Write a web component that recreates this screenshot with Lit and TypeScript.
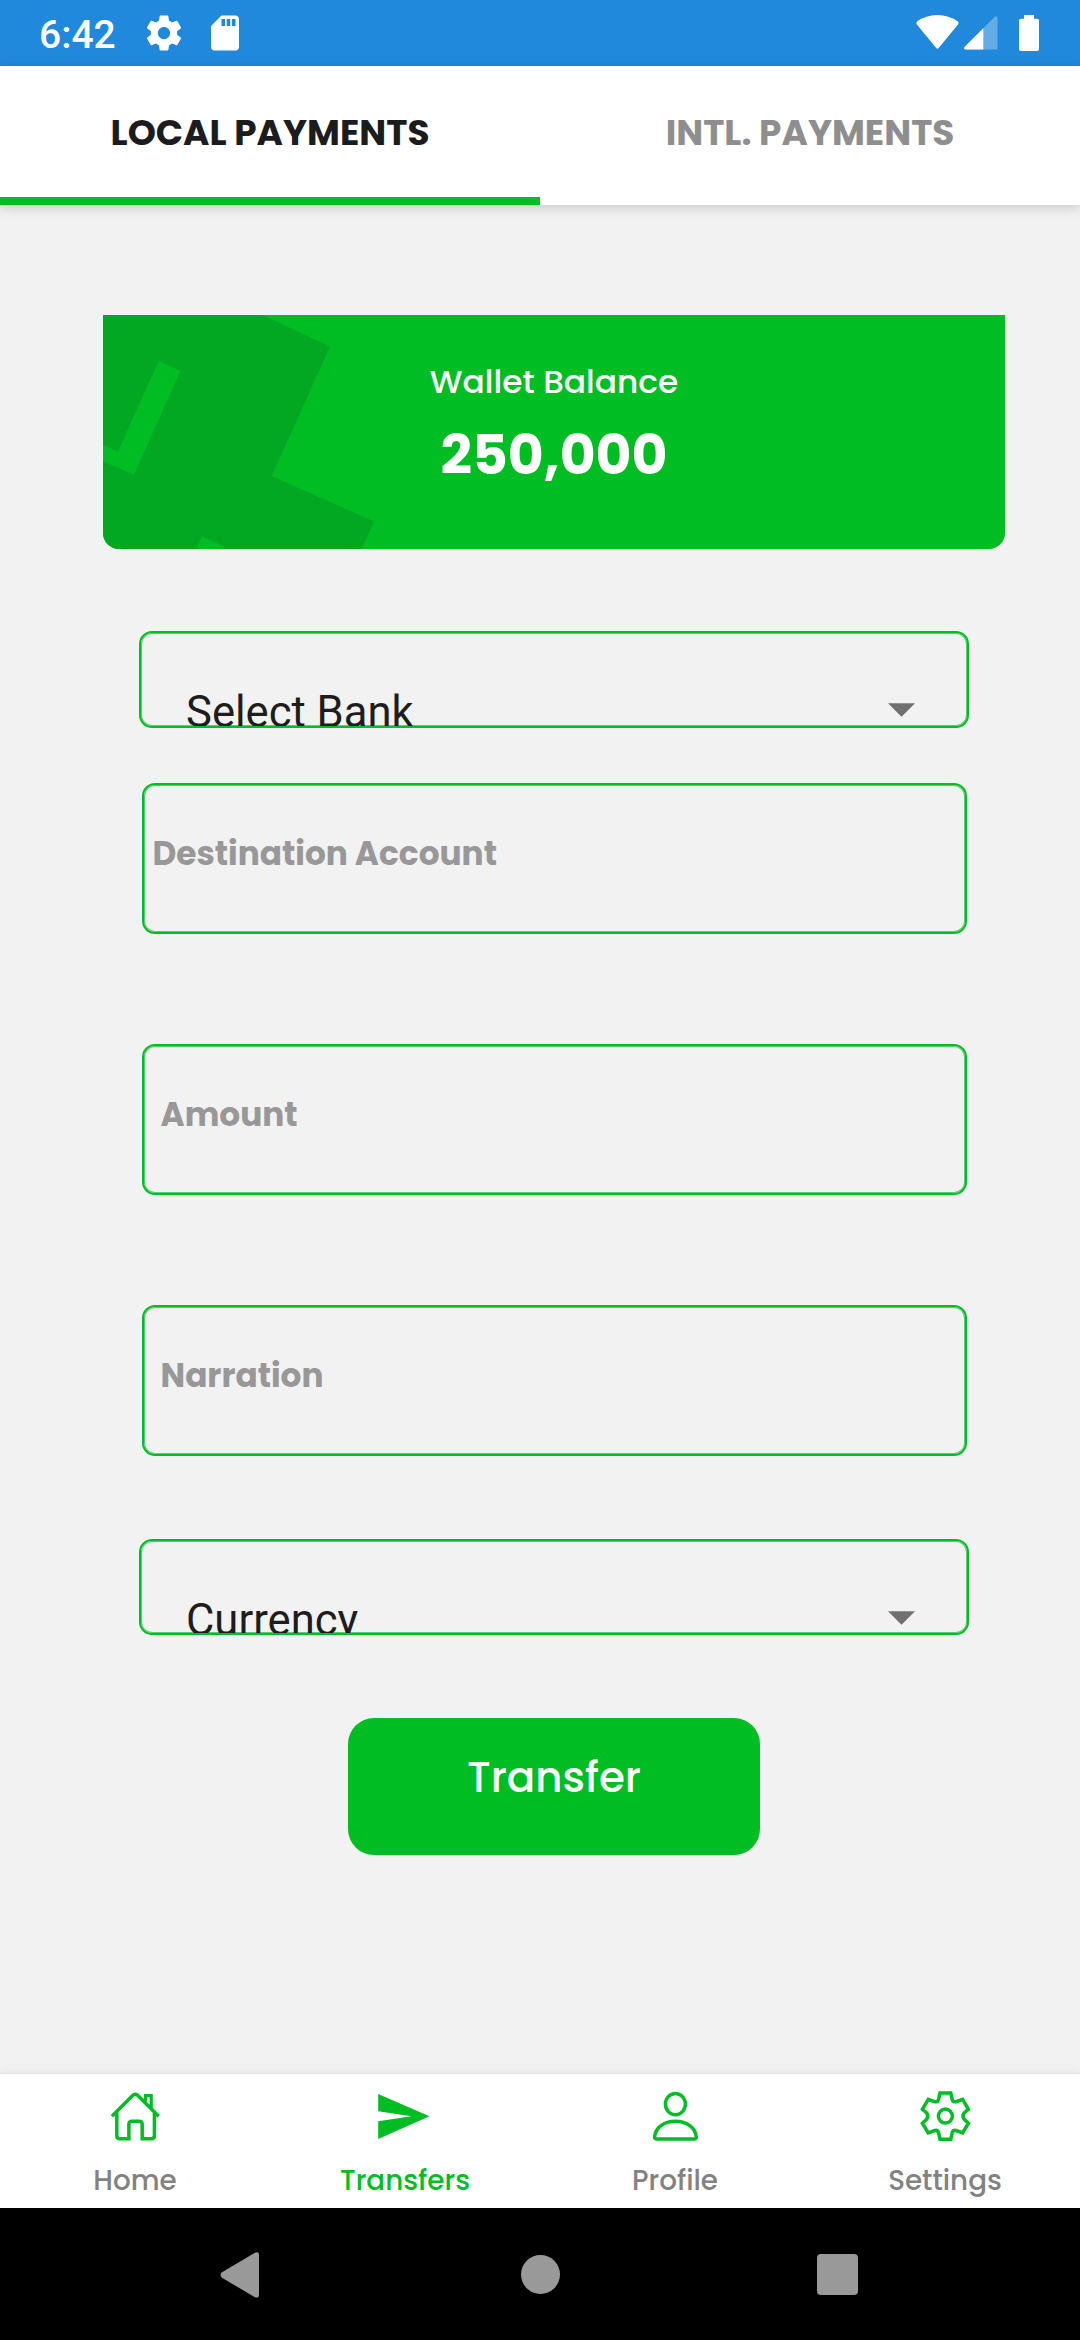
import { LitElement, html, css, svg } from "lit";

const caret = html`<svg class="caret" viewBox="0 0 27 14"><path d="M0 0.3H27L13.5 13.8Z" /></svg>`;

const icons: Record<string, unknown> = {
  home: svg`<path d="M3.9 26.2 24.4 5.8Q27.3 2.6 30.2 5.8L50.7 26.2M8.8 22.5V45.5Q8.8 48.7 12 48.7H20.9V34.5Q20.9 31.3 24 31.3H31Q34.2 31.3 34.2 34.5V48.7H43.4Q46.4 48.7 46.4 45.5V22.5"/><path stroke-width="3.2" d="M37.6 11.5V5.5H43.2V19"/>`,
  send: svg`<path class="solid" d="M0.2 4 51.5 26.3 0.2 48.9V31.2L33.5 26.3 0.2 21.2Z"/>`,
  profile: svg`<ellipse cx="27.4" cy="14.1" rx="10" ry="10.6"/><path d="M6.6 47C7.4 37.6 15.8 31.3 27.4 31.3S47.4 37.6 48.3 47Q48.4 48.9 46.6 48.9H8.3Q6.5 48.9 6.6 47Z"/>`,
  settings: svg`<circle cx="27.4" cy="26.1" r="7"/><path d="M22 2.9H32.8L34.2 9.6Q35 12.4 38 11.7L44.6 9.4 50.4 19.4 46.2 22.9Q43.7 26.1 46.2 29.3L50.4 33.2 44.6 42.8 38 40.5Q35 39.8 34.2 42.6L32.8 49.3H22L20.6 42.6Q19.8 39.8 16.8 40.5L10.2 42.8 4.4 33.2 8.6 29.3Q11.1 26.1 8.6 22.9L4.4 19.4 10.2 9.4 16.8 11.7Q19.8 12.4 20.6 9.6Z"/>`,
};

const tabs = [
  { label: "LOCAL PAYMENTS", active: true },
  { label: "INTL. PAYMENTS", active: false },
];

const navItems = [
  { icon: "home", label: "Home", active: false },
  { icon: "send", label: "Transfers", active: true },
  { icon: "profile", label: "Profile", active: false },
  { icon: "settings", label: "Settings", active: false },
];

class AppRoot extends LitElement {
  static styles = css`
    :host {
      display: flex; flex-direction: column; width: 1080px; height: 2340px;
      background: #f2f2f2; overflow: hidden;
      font-family: "Poppins", "Inter", sans-serif;
    }
    svg { display: block; }
    .status { display: flex; align-items: center; height: 66px; background: #2189dc; color: #fff; box-sizing: border-box; padding: 0 41px 0 39px; }
    .time { font: 500 39px/66px "Roboto", sans-serif; width: 104px; padding-top: 2px; box-sizing: border-box; height: 66px; }
    .status svg { fill: #fff; }
    .left { width: 42px; height: 42px; }
    .sd { margin-left: 19px; }
    .wifi { margin-left: auto; width: 43px; height: 34px; margin-top: -3px; }
    .signal { margin-left: 5px; width: 34px; height: 34px; }
    .battery { margin-left: 21px; width: 20px; height: 36px; }
    .tabs { display: flex; height: 139px; background: #fff; box-shadow: 0 3px 12px rgba(0,0,0,.17); }
    .tab { flex: 1; box-sizing: border-box; padding-top: 39.2px; text-align: center; font-size: 35.85px; font-weight: 700; line-height: 55px; color: #8e8e8e; }
    .tab.active { color: #1c1b1d; border-bottom: 8px solid #00bd24; }
    .content { flex: 1; display: flex; flex-direction: column; align-items: center; padding: 110px 0 0 28px; }
    .card { width: 902px; height: 234px; background: #00bd24; border-radius: 0 0 16px 16px; overflow: hidden; display: grid; color: #fff; text-align: center; }
    .art, .balance { grid-area: 1 / 1; }
    .balance { padding-top: 41.5px; }
    .label { font-size: 32.8px; font-weight: 500; line-height: 50px; }
    .amount { font-size: 55.2px; font-weight: 700; line-height: 80px; margin-top: 8.6px; }
    .box { box-sizing: border-box; border: 2px solid #00bd24; box-shadow: inset 0 0 0 1px rgba(0,189,36,.65); border-radius: 13px; overflow: hidden; }
    .select { width: 830px; height: 97px; margin-top: 82px; display: flex; justify-content: space-between; padding: 54.6px 52.5px 0 45px; font: 400 43.6px/50px "Roboto", sans-serif; color: #1d1d1d; white-space: nowrap; }
    .caret { width: 27px; height: 14px; fill: #707070; margin-top: 15.3px; }
    .input { width: 825px; height: 151px; font-size: 32.75px; font-weight: 700; line-height: 50px; color: #989898; padding-top: 43.8px; padding-left: 17px; }
    .destination { margin-top: 55px; padding-left: 9px; }
    .spaced { margin-top: 110px; }
    .currency { margin-top: 83px; height: 96px; }
    .transfer { margin-top: 83px; width: 412px; height: 137px; border-radius: 26px; background: #00bd24; color: #fff; text-align: center; font-size: 42px; font-weight: 500; line-height: 60px; padding-top: 29.5px; box-sizing: border-box; }
    .nav { display: grid; grid-template-columns: repeat(4, 1fr); height: 135px; box-sizing: border-box; background: #fff; border-top: 1px solid #e3e3e3; box-shadow: 0 0 10px rgba(0,0,0,.08); padding-top: 16px; }
    .item { display: flex; flex-direction: column; align-items: center; gap: 17.2px; font-size: 27.8px; font-weight: 500; line-height: 40px; color: #828282; }
    .item.active { color: #00bd24; }
    .icon { width: 54px; height: 54px; fill: none; stroke: #00bd24; stroke-width: 3.5; }
    .icon .solid { fill: #00bd24; stroke: none; }
    .system { display: flex; align-items: center; justify-content: space-between; height: 132px; background: #000; box-sizing: border-box; padding: 1px 222px 0 220px; }
    .system svg { fill: #999; }
    .circle { margin-left: 5px; }
  `;

  render() {
    return html`
      <div class="status">
        <div class="time">6:42</div>
        <svg class="left" viewBox="0 0 24 24"><path d="M19.43 12.98c.04-.32.07-.64.07-.98s-.03-.66-.07-.98l2.11-1.65c.19-.15.24-.42.12-.64l-2-3.46c-.12-.22-.39-.3-.61-.22l-2.49 1c-.52-.4-1.08-.73-1.69-.98l-.38-2.65A.488.488 0 0 0 14 2h-4c-.25 0-.46.18-.49.42l-.38 2.65c-.61.25-1.17.59-1.69.98l-2.49-1c-.23-.09-.49 0-.61.22l-2 3.46c-.13.22-.07.49.12.64l2.11 1.65c-.04.32-.07.65-.07.98s.03.66.07.98l-2.11 1.65c-.19.15-.24.42-.12.64l2 3.46c.12.22.39.3.61.22l2.49-1c.52.4 1.08.73 1.69.98l.38 2.65c.03.24.24.42.49.42h4c.25 0 .46-.18.49-.42l.38-2.65c.61-.25 1.17-.59 1.69-.98l2.49 1c.23.09.49 0 .61-.22l2-3.46c.12-.22.07-.49-.12-.64l-2.11-1.65zM12 15.5c-1.93 0-3.5-1.57-3.5-3.5s1.57-3.5 3.5-3.5 3.5 1.57 3.5 3.5-1.57 3.5-3.5 3.5z"/></svg>
        <svg class="left sd" viewBox="0 0 24 24"><path d="M18 2h-8L4.02 8 4 20c0 1.1.9 2 2 2h12c1.1 0 2-.9 2-2V4c0-1.1-.9-2-2-2zm-6 6h-2V4h2v4zm3 0h-2V4h2v4zm3 0h-2V4h2v4z"/></svg>
        <svg class="wifi" viewBox="0 0 43 34"><path d="M1 6.5Q10 0 21.3 0T42 6.5Q43 8 42 9.5L22.7 33Q21.4 34.3 20.2 33L0.9 9.5Q0 8 1 6.5Z"/></svg>
        <svg class="signal" viewBox="0 0 34 34"><path opacity=".3" d="M30.8.8Q33.5-.8 33.5 2V32Q33.5 33.5 32 33.5H1.5Q-.8 33 .5 31Z"/><path d="M19.3 12.2V33.5H1.5Q-.8 33 .5 31Z"/></svg>
        <svg class="battery" viewBox="0 0 20 36"><path d="M5 0H15V3.7H18Q20 3.7 20 5.7V34Q20 36 18 36H2Q0 36 0 34V5.7Q0 3.7 2 3.7H5Z"/></svg>
      </div>
      <div class="tabs">${tabs.map((t) => html`<div class="tab ${t.active ? "active" : ""}">${t.label}</div>`)}</div>
      <div class="content">
        <div class="card">
          <svg class="art" width="902" height="234" viewBox="0 0 902 234">
            <path fill="#02a822" fill-rule="evenodd" d="M0 0H159.5L227 31.5 168.7 161 271 206.5 258.5 234H0ZM55.7 46 77.3 56 31 159.7 0 146.3V130L15 136.5ZM98.7 221.3 121.5 231.5 120.4 234H94Z"/>
          </svg>
          <div class="balance">
            <div class="label">Wallet Balance</div>
            <div class="amount">250,000</div>
          </div>
        </div>
        <div class="box select"><span>Select Bank</span>${caret}</div>
        <div class="box input destination">Destination Account</div>
        <div class="box input spaced">Amount</div>
        <div class="box input spaced">Narration</div>
        <div class="box select currency"><span>Currency</span>${caret}</div>
        <div class="transfer">Transfer</div>
      </div>
      <div class="nav">
        ${navItems.map((n) => html`
          <div class="item ${n.active ? "active" : ""}">
            <svg class="icon" viewBox="0 0 54 54">${icons[n.icon]}</svg>
            <span>${n.label}</span>
          </div>`)}
      </div>
      <div class="system">
        <svg width="39" height="46" viewBox="0 0 39 46"><path d="M2 20.3 34.5.9Q39-1 39 3V43Q39 47 34.5 45.1L2 25.7Q-1 23 2 20.3Z"/></svg>
        <svg class="circle" width="39" height="39" viewBox="0 0 39 39"><circle cx="19.5" cy="19.5" r="19.5"/></svg>
        <svg width="41" height="41" viewBox="0 0 41 41"><rect width="41" height="41" rx="4"/></svg>
      </div>
    `;
  }
}
customElements.define("app-root", AppRoot);
